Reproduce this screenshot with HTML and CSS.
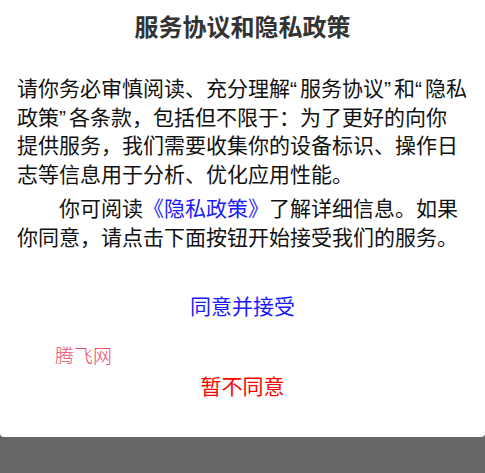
FILE: index.html
```html
<!DOCTYPE html>
<html lang="zh-CN">
<head>
<meta charset="utf-8">
<title>服务协议和隐私政策</title>
<link rel="stylesheet" href="styles.css">
</head>
<body>
<div class="dialog">
  <h1 class="title">服务协议和隐私政策</h1>
  <div class="content">
    <p class="para">请你务必审慎阅读、充分理解<span class="q">“</span>服务协议<span class="q">”</span>和<span class="q">“</span>隐私政策<span class="q">”</span>各条款，包括但不限于：为了更好的向你提供服务，我们需要收集你的设备标识、操作日志等信息用于分析、优化应用性能。</p>
    <p class="para indent">你可阅读<a class="link" href="#">《隐私政策》</a>了解详细信息。如果你同意，请点击下面按钮开始接受我们的服务。</p>
  </div>
  <div class="actions">
    <div class="btn agree">同意并接受</div>
    <div class="btn disagree">暂不同意</div>
  </div>
  <div class="watermark">腾飞网</div>
</div>
</body>
</html>
```
FILE: styles.css
```css
html, body {
  margin: 0;
  padding: 0;
  background: #666666;
  height: 100%;
}
body {
  font-family: "Noto Sans CJK SC", "Noto Sans", sans-serif;
}
.dialog {
  position: relative;
  background: #ffffff;
  height: 437px;
  border-radius: 0 0 4px 4px;
  display: flex;
  flex-direction: column;
}
.title {
  margin: 0;
  padding-top: 10px;
  font-size: 24px;
  line-height: 32px;
  font-weight: bold;
  color: #333333;
  text-align: center;
}
.content {
  margin-top: 31px;
  padding: 0 18px 0 17px;
  font-size: 21px;
  line-height: 28.5px;
  color: #111111;
}
.q {
  font-family: "Liberation Sans", sans-serif;
  letter-spacing: 3px;
  line-height: 0;
}
.para {
  margin: 0;
}
.indent {
  margin-top: 6px;
  text-indent: 2em;
}
.link {
  color: #1a1aff;
  text-decoration: none;
}
.actions {
  margin-top: 30px;
  display: flex;
  flex-direction: column;
  gap: 30px;
}
.btn {
  height: 50px;
  line-height: 50px;
  font-size: 21px;
  text-align: center;
}
.agree {
  color: #1a1aff;
}
.disagree {
  color: #ff0000;
}
.watermark {
  position: absolute;
  left: 55px;
  top: 343px;
  font-size: 19px;
  line-height: 24px;
  color: #ee4a6e;
  font-weight: 300;
}
```
